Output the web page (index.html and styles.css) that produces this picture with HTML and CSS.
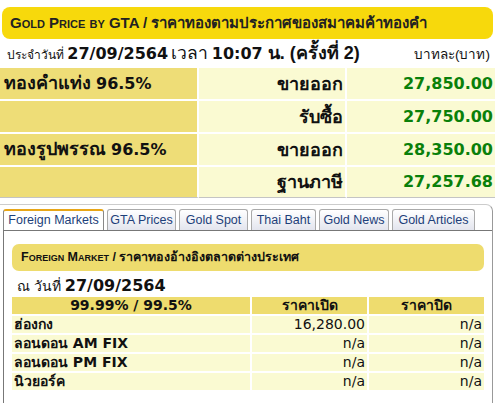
FILE: index.html
```html
<!DOCTYPE html>
<html lang="th">
<head>
<meta charset="utf-8">
<link rel="stylesheet" href="styles.css">
</head>
<body>
<div class="page">
  <div class="banner">Gold Price by GTA / ราคาทองตามประกาศของสมาคมค้าทองคำ</div>
  <div class="dateline">
    <div class="when">ประจำวันที่ <b class="big"><span class="lat">27/09/2564</span></b> <span class="mid">เวลา</span> <b class="big"><span class="lat">10:07</span> น. (ครั้งที่ 2)</b></div>
    <div class="unit">บาทละ(บาท)</div>
  </div>
  <table class="gta">
    <tr><td class="name">ทองคำแท่ง <span class="lat">96.5%</span></td><td class="kind">ขายออก</td><td class="price">27,850.00</td></tr>
    <tr><td class="name"></td><td class="kind">รับซื้อ</td><td class="price">27,750.00</td></tr>
    <tr><td class="name">ทองรูปพรรณ <span class="lat">96.5%</span></td><td class="kind">ขายออก</td><td class="price">28,350.00</td></tr>
    <tr><td class="name"></td><td class="kind">ฐานภาษี</td><td class="price">27,257.68</td></tr>
  </table>
  <div class="tabbox">
    <ul class="tabs">
      <li class="tab active">Foreign Markets</li>
      <li class="tab">GTA Prices</li>
      <li class="tab">Gold Spot</li>
      <li class="tab">Thai Baht</li>
      <li class="tab">Gold News</li>
      <li class="tab">Gold Articles</li>
    </ul>
    <div class="panel">
      <div class="subhead">Foreign Market / ราคาทองอ้างอิงตลาดต่างประเทศ</div>
      <div class="asof">ณ วันที่ <b class="big"><span class="lat">27/09/2564</span></b></div>
      <table class="fm">
        <tr class="hd"><th>99.99% / 99.5%</th><th>ราคาเปิด</th><th>ราคาปิด</th></tr>
        <tr><td class="lbl">ฮ่องกง</td><td>16,280.00</td><td>n/a</td></tr>
        <tr><td class="lbl">ลอนดอน AM FIX</td><td>n/a</td><td>n/a</td></tr>
        <tr><td class="lbl">ลอนดอน PM FIX</td><td>n/a</td><td>n/a</td></tr>
        <tr><td class="lbl">นิวยอร์ค</td><td>n/a</td><td>n/a</td></tr>
      </table>
    </div>
  </div>
</div>
</body>
</html>
```
FILE: styles.css
```css
html, body { margin: 0; padding: 0; background: #fff; }
body { font-family: "Liberation Sans", Arial, sans-serif; color: #111; }
.page { padding: 7px 2px 0 2px; }
.lat { font-family: "DejaVu Sans", Verdana, sans-serif; font-size: 16px; }
.banner {
  background: #f7d90c;
  border-radius: 8px;
  height: 32px;
  line-height: 32px;
  padding-left: 8px;
  font-weight: bold;
  font-variant: small-caps;
  font-size: 15px;
  color: #222;
}
.dateline {
  display: flex;
  justify-content: space-between;
  align-items: baseline;
  height: 29px;
  line-height: 29px;
  padding: 0 3px 0 5px;
  font-size: 12px;
}
.big { font-size: 18px; font-weight: bold; }
.mid { font-size: 17.5px; }
.unit { font-size: 13.5px; }
table { border-collapse: separate; }
.gta {
  width: calc(100% + 4px);
  margin-left: -2px;
  border-spacing: 0 2px;
  margin-top: -2px;
  table-layout: fixed;
}
.gta td {
  box-sizing: border-box;
  height: 31px;
  line-height: 24px;
  padding: 0 2px;
  font-size: 18px;
  font-weight: bold;
}
.gta .name { width: 199px; background: #eedd77; padding-left: 4px; border-right: 2px solid #fff; }
.gta .kind { width: 148px; background: #fafad2; text-align: right; border-right: 2px solid #fff; }
.gta .price { background: #fafad2; text-align: right; color: #0a800a; font-family: "DejaVu Sans", Verdana, sans-serif; font-size: 16px; }
.gta tr:last-child td { border-bottom: 1px solid #c4c4c4; }
.tabbox {
  margin-top: 4px;
  margin-left: -2px;
  border-top: 1px solid #ccc;
  border-right: 1px solid #999;
  border-top-right-radius: 7px;
  padding-top: 4px;
}
.tabs {
  list-style: none;
  margin: 0;
  padding: 0 0 0 3px;
  display: flex;
  gap: 3px;
  height: 21px;
}
.tab {
  box-sizing: border-box;
  font-size: 12.5px;
  color: #1d3f7a;
  border: 1px solid #aaa;
  border-bottom: none;
  border-radius: 3px 3px 0 0;
  padding: 0;
  text-align: center;
  white-space: nowrap;
  line-height: 20px;
  background: linear-gradient(#fff, #e3e5ee);
}
.tab:nth-child(1) { width: 101px; }
.tab:nth-child(2) { width: 69px; }
.tab:nth-child(3) { width: 69px; }
.tab:nth-child(4) { width: 65px; }
.tab:nth-child(5) { width: 70px; }
.tab:nth-child(6) { width: 83px; }
.tab.active { background: #fff; border-top: 2px solid #e8a617; line-height: 19px; position: relative; z-index: 1; height: 21px; border-color: #e8a617 #888 transparent #888; }
.panel {
  border-left: 1px solid #777;
  border-top: 1px solid #777;
  margin-left: 3px;
  padding: 13px 8px 20px 8px;
}
.subhead {
  background: #eedc6e;
  border-radius: 7px;
  height: 27px;
  line-height: 27px;
  padding-left: 9px;
  font-weight: bold;
  font-variant: small-caps;
  font-size: 12.5px;
}
.asof { font-size: 14px; height: 24px; line-height: 24px; padding-left: 5px; margin-top: 2px; }
.fm { width: 100%; border-spacing: 0 2px; margin-top: -2px; font-size: 14px; font-family: "DejaVu Sans", Verdana, sans-serif; }
.fm th { background: #eedc6e; height: 17px; line-height: 17px; font-weight: bold; text-align: center; padding: 0; border-right: 2px solid #fff; }
.fm th:last-child { border-right: none; }
.fm td { background: #fafad2; height: 17px; line-height: 17px; text-align: right; padding: 0 2px; border-right: 2px solid #fff; }
.fm td:last-child { border-right: none; }
.fm td.lbl { text-align: left; font-weight: bold; width: 234px; }
.fm td:nth-child(2) { width: 111px; }
```
